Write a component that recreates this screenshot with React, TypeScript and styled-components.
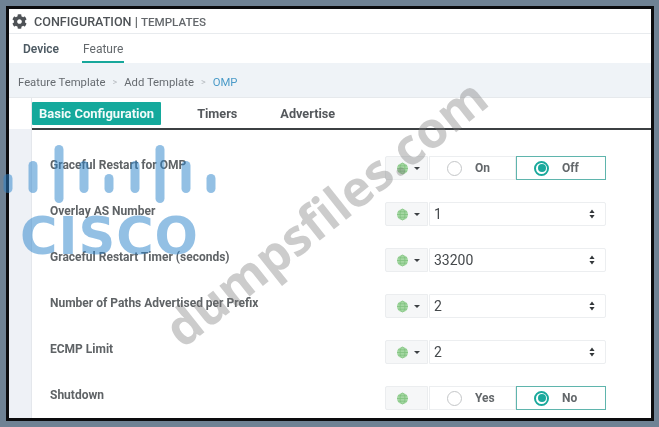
import styled, { createGlobalStyle } from "styled-components";
import { FaCog } from "react-icons/fa";

const GlobalStyle = createGlobalStyle`
  html, body {
    margin: 0;
    padding: 0;
    background: #6f8294;
  }
  * {
    box-sizing: border-box;
  }
`;

const Page = styled.div`
  position: relative;
  width: 659px;
  height: 427px;
  padding: 6px 5px 6px 6px;
  background: #6f8294;
  overflow: hidden;
  font-family: Roboto, "Liberation Sans", sans-serif;
`;
const Panel = styled.div`
  width: 100%;
  height: 100%;
  display: flex;
  flex-direction: column;
  background: #fff;
  border: 3px solid #0c0c0e;
  overflow: hidden;
  filter: blur(0.35px);
`;
const Header = styled.div`
  height: 25px;
  flex: none;
  display: flex;
  align-items: center;
  gap: 7px;
  padding: 1px 0 0 3px;
  border-bottom: 1px solid #e8ebee;
  color: #4f5357;
  font-size: 12.6px;
  font-weight: 500;
`;
const HeaderLight = styled.span`
  font-size: 11.6px;
  font-weight: 500;
  color: #63676b;
`;
const TopTabs = styled.div`
  height: 29px;
  flex: none;
  display: flex;
  gap: 22px;
  padding-left: 13px;
`;
const TopTab = styled.div<{ $active?: boolean }>`
  height: 29px;
  padding: 8px 1px 0;
  font-size: 12px;
  font-weight: ${(p) => (p.$active ? 400 : 600)};
  color: ${(p) => (p.$active ? "#63686c" : "#4d5a63")};
  border-bottom: ${(p) => (p.$active ? "2px solid #17a79b" : "none")};
`;
const Crumbs = styled.div`
  height: 35px;
  flex: none;
  display: flex;
  align-items: center;
  gap: 7px;
  padding: 4px 0 0 9px;
  background: #eff3f7;
  border-bottom: 1px solid #e6e9ec;
  font-size: 11.3px;
  color: #666b70;
`;
const CrumbSep = styled.span`
  color: #b8bdc2;
  font-size: 9px;
`;
const CrumbActive = styled.span`
  color: #4b9bc8;
`;
const Body = styled.div`
  flex: 1;
  display: flex;
  min-height: 0;
`;
const Rail = styled.div`
  width: 23px;
  flex: none;
  background: linear-gradient(#fff 0, #fff 31px, #eef1f6 31px);
  border-right: 1px solid #e4e7ec;
`;
const Main = styled.div`
  flex: 1;
  min-width: 0;
`;
const SectionTabs = styled.div`
  height: 32px;
  display: flex;
  align-items: flex-end;
  gap: 29px;
  padding-bottom: 3px;
  border-bottom: 2px solid #3c4043;
`;
const SectionTab = styled.div<{ $active?: boolean }>`
  height: 23px;
  line-height: 23px;
  padding: 0 7px;
  border-radius: 1px;
  font-size: ${(p) => (p.$active ? "13px" : "12.7px")};
  font-weight: 700;
  background: ${(p) => (p.$active ? "#14a99c" : "transparent")};
  color: ${(p) => (p.$active ? "#f2fbfa" : "#54585c")};
`;
const Rows = styled.div`
  padding: 20px 0 0 18px;
  display: flex;
  flex-direction: column;
  gap: 10px;
`;
const Row = styled.div`
  height: 36px;
  display: flex;
  align-items: center;
`;
const Label = styled.div`
  width: 335px;
  flex: none;
  margin-top: -6px;
  font-size: 12px;
  font-weight: 700;
  color: #5f6366;
`;
const Scope = styled.div`
  width: 43px;
  height: 24px;
  flex: none;
  display: flex;
  align-items: center;
  gap: 5px;
  padding-left: 10px;
  background: #f6f7f8;
  border: 1px solid #ebedef;
  border-radius: 2px 0 0 2px;
`;
const Caret = styled.span`
  width: 0;
  height: 0;
  border-left: 3px solid transparent;
  border-right: 3px solid transparent;
  border-top: 3px solid #3d4144;
`;
const Field = styled.div`
  width: 177px;
  height: 24px;
  display: flex;
  align-items: center;
  justify-content: space-between;
  padding: 0 10px 0 4px;
  margin-left: 1px;
  border: 1px solid #eceef0;
  border-radius: 0 2px 2px 0;
  font-size: 14px;
  color: #45494c;
`;
const Radios = styled.div`
  width: 177px;
  height: 24px;
  margin-left: 1px;
  display: grid;
  grid-template-columns: 87px 90px;
`;
const RadioCell = styled.div<{ $on?: boolean }>`
  display: flex;
  align-items: center;
  gap: 13px;
  padding-left: 17px;
  border: ${(p) => (p.$on ? "1px solid #5fb5ad" : "1px solid #eceef0")};
  font-size: 12px;
  font-weight: 700;
  color: #63676a;
`;
const RadioDot = styled.span<{ $on?: boolean }>`
  width: 15px;
  height: 15px;
  flex: none;
  border-radius: 50%;
  border: ${(p) => (p.$on ? "2px solid #1aa99c" : "1.5px solid #c4c6c8")};
  display: flex;
  align-items: center;
  justify-content: center;
  &::after {
    content: "";
    width: 8px;
    height: 8px;
    border-radius: 50%;
    background: ${(p) => (p.$on ? "#1aa99c" : "transparent")};
  }
`;
const CiscoMark = styled.div`
  position: absolute;
  left: 0;
  top: 144px;
  width: 220px;
  color: #2a83cb;
  opacity: 0.5;
`;
const CiscoWord = styled.div`
  position: absolute;
  left: 20px;
  top: 63px;
  font-family: "DejaVu Sans", sans-serif;
  font-size: 51px;
  line-height: 60px;
  font-weight: 700;
  letter-spacing: 1px;
`;
const Watermark = styled.div`
  position: absolute;
  left: 128px;
  top: 177px;
  font-family: "Open Sans", "Liberation Sans", sans-serif;
  font-size: 50px;
  line-height: 70px;
  font-weight: 700;
  white-space: nowrap;
  color: rgba(120, 120, 120, 0.38);
  transform: rotate(-38.5deg);
`;

const GlobeIcon = () => (
  <svg width="13" height="13" viewBox="0 0 13 13" fill="none">
    <circle cx="6.5" cy="6.5" r="5.5" fill="#a6d8a4" />
    <g stroke="#7fc27d" strokeWidth="0.8">
      <ellipse cx="6.5" cy="6.5" rx="2.4" ry="5.5" />
      <path d="M1 6.5h11M2 3.8h9M2 9.2h9" />
    </g>
  </svg>
);

const SortIcon = () => (
  <svg width="6" height="10" viewBox="0 0 6 10" fill="#33373a">
    <path d="M3 0.5 5.6 4H0.4zM3 9.5 0.4 6h5.2z" />
  </svg>
);

const BARS = [
  { x: 8, y: 30, h: 19 },
  { x: 33, y: 17, h: 32 },
  { x: 59, y: 1, h: 58 },
  { x: 84, y: 17, h: 32 },
  { x: 109, y: 30, h: 19 },
  { x: 135, y: 17, h: 32 },
  { x: 160, y: 1, h: 58 },
  { x: 186, y: 17, h: 32 },
  { x: 211, y: 30, h: 19 },
];

interface IRow {
  label: string;
  value?: string;
  radios?: [string, string];
  noCaret?: boolean;
}

const ROWS: IRow[] = [
  { label: "Graceful Restart for OMP", radios: ["On", "Off"] },
  { label: "Overlay AS Number", value: "1" },
  { label: "Graceful Restart Timer (seconds)", value: "33200" },
  { label: "Number of Paths Advertised per Prefix", value: "2" },
  { label: "ECMP Limit", value: "2" },
  { label: "Shutdown", radios: ["Yes", "No"], noCaret: true },
];

function App() {
  return (
    <Page>
      <GlobalStyle />
      <Panel>
        <Header>
          <FaCog size={15} color="#4e5256" />
          <span>
            CONFIGURATION | <HeaderLight>TEMPLATES</HeaderLight>
          </span>
        </Header>
        <TopTabs>
          <TopTab>Device</TopTab>
          <TopTab $active>Feature</TopTab>
        </TopTabs>
        <Crumbs>
          <span>Feature Template</span>
          <CrumbSep>&gt;</CrumbSep>
          <span>Add Template</span>
          <CrumbSep>&gt;</CrumbSep>
          <CrumbActive>OMP</CrumbActive>
        </Crumbs>
        <Body>
          <Rail />
          <Main>
            <SectionTabs>
              <SectionTab $active>Basic Configuration</SectionTab>
              <SectionTab>Timers</SectionTab>
              <SectionTab>Advertise</SectionTab>
            </SectionTabs>
            <Rows>
              {ROWS.map((row) => (
                <Row key={row.label}>
                  <Label>{row.label}</Label>
                  <Scope>
                    <GlobeIcon />
                    {!row.noCaret && <Caret />}
                  </Scope>
                  {row.radios ? (
                    <Radios>
                      <RadioCell>
                        <RadioDot />
                        {row.radios[0]}
                      </RadioCell>
                      <RadioCell $on>
                        <RadioDot $on />
                        {row.radios[1]}
                      </RadioCell>
                    </Radios>
                  ) : (
                    <Field>
                      {row.value}
                      <SortIcon />
                    </Field>
                  )}
                </Row>
              ))}
            </Rows>
          </Main>
        </Body>
      </Panel>
      <CiscoMark>
        <svg width="220" height="60" viewBox="0 0 220 60" fill="currentColor">
          {BARS.map((bar) => (
            <rect key={bar.x} x={bar.x - 4.5} y={bar.y} width="9" height={bar.h} rx="4.5" />
          ))}
        </svg>
        <CiscoWord>CISCO</CiscoWord>
      </CiscoMark>
      <Watermark>dumpsfiles.com</Watermark>
    </Page>
  );
}

export default App;
